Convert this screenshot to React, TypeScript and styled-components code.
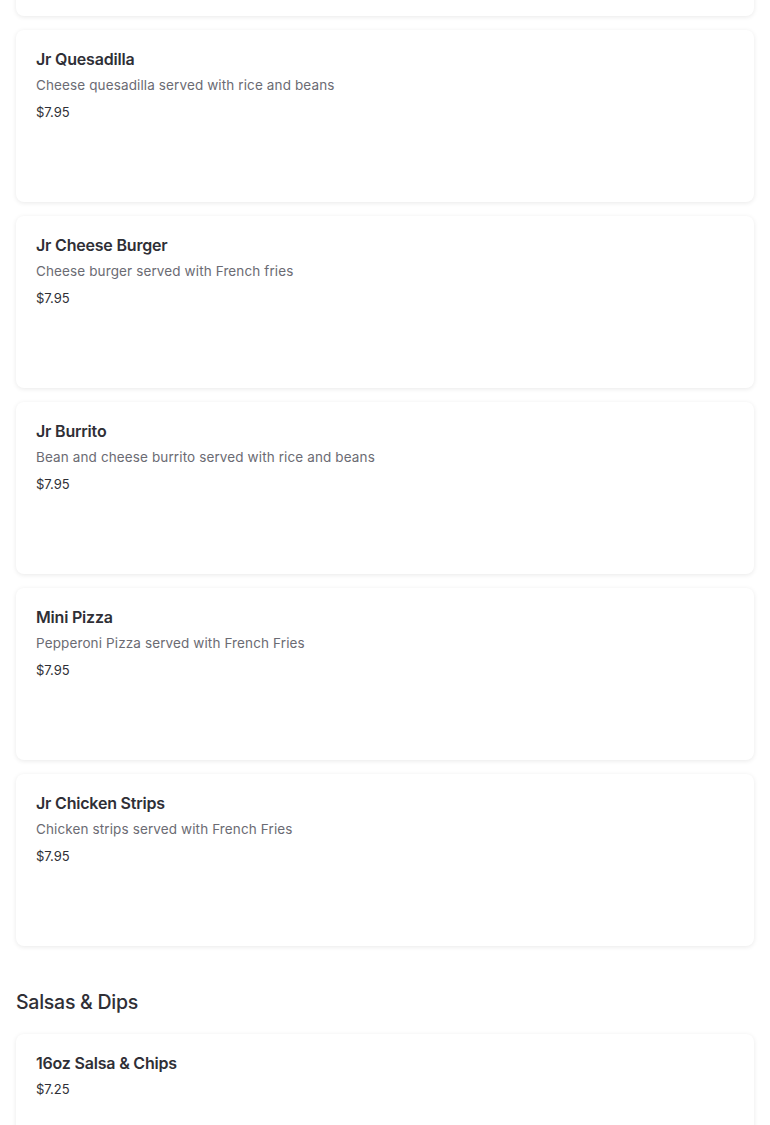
import React from "react";
import styled, { createGlobalStyle } from "styled-components";

const Global = createGlobalStyle`
  html, body { margin: 0; padding: 0; background: #ffffff; }
  body { font-family: "Inter", "Liberation Sans", sans-serif; -webkit-font-smoothing: antialiased; }
`;

const Page = styled.main`
  padding: 0 16px 40px;
  display: flex;
  flex-direction: column;
  overflow: hidden;
`;

const List = styled.div`
  display: flex;
  flex-direction: column;
  gap: 14px;
`;

const Card = styled.article<{ $clip?: boolean }>`
  background: #fff;
  border-radius: 8px;
  box-shadow: 0 1px 5px rgba(0, 0, 0, 0.09);
  height: 172px;
  box-sizing: border-box;
  padding: 19px 20px;
  display: flex;
  flex-direction: column;
  margin-top: ${(p) => (p.$clip ? "-156px" : "0")};
`;

const Title = styled.h3`
  margin: 0;
  font-size: 16px;
  line-height: 20px;
  font-weight: 600;
  color: #2f2f36;
  letter-spacing: -0.2px;
`;

const Desc = styled.p`
  margin: 7px 0 0;
  font-size: 13.5px;
  line-height: 18px;
  color: #6b6b73;
  letter-spacing: 0.12px;
`;

const Price = styled.div<{ $afterTitle?: boolean }>`
  margin-top: ${(p) => (p.$afterTitle ? "7px" : "9px")};
  font-size: 13px;
  line-height: 18px;
  color: #2f2f36;
`;

const SectionTitle = styled.h2`
  margin: 43px 0 19px;
  font-size: 19.5px;
  line-height: 26px;
  font-weight: 500;
  color: #2f2f36;
  letter-spacing: -0.25px;
`;

type Item = { name: string; desc?: string; price: string };

const kids: Item[] = [
  { name: "Jr Quesadilla", desc: "Cheese quesadilla served with rice and beans", price: "$7.95" },
  { name: "Jr Cheese Burger", desc: "Cheese burger served with French fries", price: "$7.95" },
  { name: "Jr Burrito", desc: "Bean and cheese burrito served with rice and beans", price: "$7.95" },
  { name: "Mini Pizza", desc: "Pepperoni Pizza served with French Fries", price: "$7.95" },
  { name: "Jr Chicken Strips", desc: "Chicken strips served with French Fries", price: "$7.95" },
];

const MenuCard = ({ item }: { item: Item }) => (
  <Card>
    <Title>{item.name}</Title>
    {item.desc && <Desc>{item.desc}</Desc>}
    <Price $afterTitle={!item.desc}>{item.price}</Price>
  </Card>
);

export default function App() {
  return (
    <>
      <Global />
      <Page>
        <List>
          <Card $clip />
          {kids.map((it) => (
            <MenuCard key={it.name} item={it} />
          ))}
        </List>
        <SectionTitle>Salsas &amp; Dips</SectionTitle>
        <List>
          <MenuCard item={{ name: "16oz Salsa & Chips", price: "$7.25" }} />
        </List>
      </Page>
    </>
  );
}
